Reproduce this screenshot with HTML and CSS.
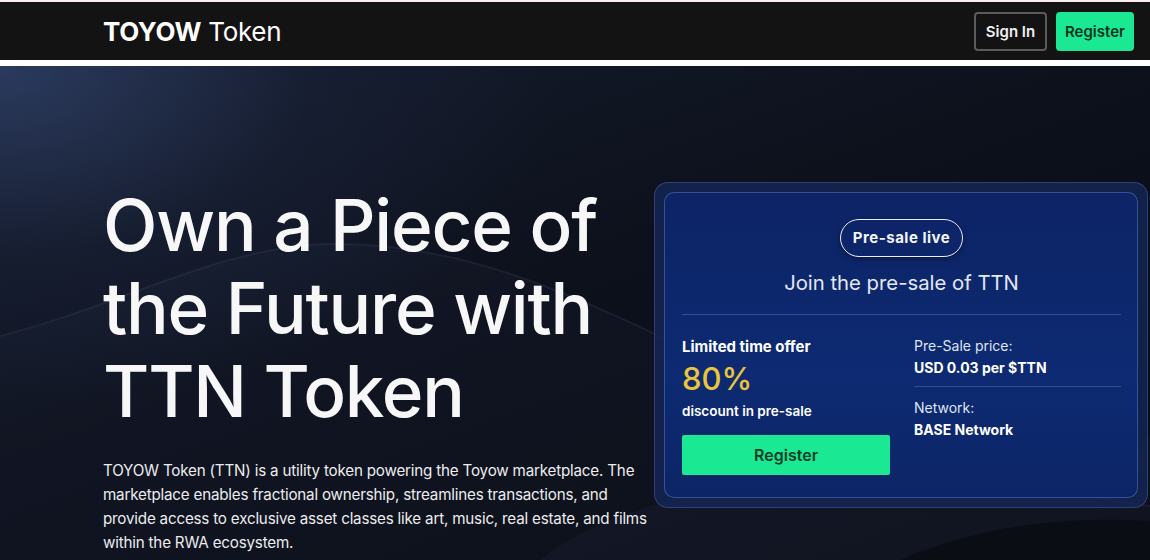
FILE: index.html
```html
<!DOCTYPE html>
<html lang="en">
<head>
<meta charset="utf-8">
<title>TOYOW Token</title>
<link rel="stylesheet" href="styles.css">
</head>
<body>
<div class="topline"></div>
<header class="nav">
  <div class="container nav-inner">
    <div class="logo"><b>TOYOW</b> Token</div>
    <div class="nav-actions">
      <a class="btn btn-outline" href="#">Sign In</a>
      <a class="btn btn-green" href="#">Register</a>
    </div>
  </div>
</header>
<div class="gap"></div>
<main class="hero">
  <svg class="waves" viewBox="0 0 1150 494" preserveAspectRatio="none" aria-hidden="true">
    <path d="M0 270 C 120 240, 220 180, 330 178 C 450 176, 560 220, 700 290 C 850 365, 1000 420, 1150 440 L1150 494 L0 494 Z" fill="rgba(70,85,130,0.07)"/>
    <path d="M0 270 C 120 240, 220 180, 330 178 C 450 176, 560 220, 700 290 C 850 365, 1000 420, 1150 440" fill="none" stroke="rgba(130,150,200,0.10)" stroke-width="2"/>
    <path d="M540 494 C 620 430, 760 410, 880 425 C 980 440, 1060 420, 1150 370 L1150 494 Z" fill="rgba(80,100,160,0.07)"/>
    <path d="M900 494 C 980 460, 1060 450, 1150 455 L1150 494 Z" fill="rgba(0,0,0,0.35)"/>
  </svg>
  <div class="container hero-inner">
    <section class="intro">
      <h1>Own a Piece of the Future with TTN Token</h1>
      <p>TOYOW Token (TTN) is a utility token powering the Toyow marketplace. The marketplace enables fractional ownership, streamlines transactions, and provide access to exclusive asset classes like art, music, real estate, and films within the RWA ecosystem.</p>
    </section>
    <aside class="card-outer">
      <div class="card">
        <div class="pill">Pre-sale live</div>
        <h2>Join the pre-sale of TTN</h2>
        <div class="card-grid">
          <div class="offer">
            <div class="offer-title">Limited time offer</div>
            <div class="offer-pct">80%</div>
            <div class="offer-sub">discount in pre-sale</div>
            <a class="btn-wide" href="#">Register</a>
          </div>
          <div class="facts">
            <div class="fact">
              <div class="fact-label">Pre-Sale price:</div>
              <div class="fact-value">USD 0.03 per $TTN</div>
            </div>
            <div class="fact">
              <div class="fact-label">Network:</div>
              <div class="fact-value">BASE Network</div>
            </div>
          </div>
        </div>
      </div>
    </aside>
  </div>
</main>
</body>
</html>
```
FILE: styles.css
```css
* { box-sizing: border-box; }
html, body { margin: 0; padding: 0; }
body {
  width: 1150px;
  height: 560px;
  overflow: hidden;
  background: #ffffff;
  font-family: Inter, "Noto Sans", sans-serif;
  color: #fff;
}
a { text-decoration: none; }
.topline { height: 2px; background: #fbeeee; }
.container { padding: 0 16px 0 103px; }
.nav { height: 58px; background: #131313; }
.nav-inner {
  height: 100%;
  display: flex;
  align-items: center;
  justify-content: space-between;
}
.logo { font-size: 26px; letter-spacing: -0.3px; color: #fff; font-weight: 400; }
.logo b { font-weight: 700; }
.nav-actions { display: flex; gap: 9px; }
.btn {
  display: inline-flex;
  align-items: center;
  justify-content: center;
  height: 39px;
  border-radius: 4px;
  font-size: 15px;
  font-weight: 600;
}
.btn-outline { width: 73px; border: 2px solid #5b5b5b; color: #eef0f2; }
.btn-green { width: 78px; background: #1be893; color: #0b3520; }
.gap { height: 6px; background: #fff; }
.hero {
  position: relative;
  height: 494px;
  overflow: hidden;
  background:
    radial-gradient(ellipse 700px 420px at 0% 0%, rgba(44,60,96,0.95) 0%, rgba(25,33,55,0.6) 45%, rgba(10,14,24,0) 80%),
    linear-gradient(160deg, #161d2e 0%, #0d111c 45%, #07090f 100%);
}
.waves { position: absolute; inset: 0; width: 100%; height: 100%; }
.hero-inner {
  position: relative;
  display: flex;
  justify-content: space-between;
  padding-right: 2px;
}
.intro { width: 545px; padding-top: 118px; }
h1 {
  margin: 0;
  font-size: 71px;
  line-height: 83px;
  font-weight: 500;
  letter-spacing: -1.2px;
  color: #f7f7f8;
}
.intro p {
  margin: 26px 0 0;
  font-size: 15.2px;
  line-height: 24px;
  letter-spacing: -0.2px;
  color: #ececee;
}
.card-outer {
  margin-top: 116px;
  width: 494px;
  height: 326px;
  padding: 9px;
  border-radius: 14px;
  background: rgba(22,40,92,0.75);
  border: 1px solid rgba(80,105,170,0.45);
}
.card {
  height: 100%;
  border-radius: 10px;
  background: linear-gradient(180deg, #0d2466 0%, #0d2a72 60%, #0c2566 100%);
  border: 1px solid rgba(90,120,190,0.55);
  padding: 26px 16px 0 17px;
  display: flex;
  flex-direction: column;
  align-items: center;
}
.pill {
  border: 1px solid #e8ecf6;
  border-radius: 20px;
  padding: 8px 12px 9px;
  font-size: 15px;
  font-weight: 700;
  letter-spacing: 0.5px;
  color: #f2f4fa;
  box-shadow: 0 2px 6px rgba(0,0,0,0.35);
}
h2 {
  margin: 13px 0 0;
  font-size: 20.3px;
  font-weight: 400;
  color: #e3e8f5;
  width: 100%;
  text-align: center;
  padding-bottom: 19px;
  border-bottom: 1px solid rgba(120,145,210,0.35);
}
.card-grid {
  width: 100%;
  display: grid;
  grid-template-columns: 208px 1fr;
  column-gap: 24px;
  padding-top: 22px;
}
.offer-title { font-size: 15px; font-weight: 700; color: #fff; }
.offer-pct { font-size: 31px; font-weight: 500; color: #e9c53c; margin-top: 4px; line-height: 38px; }
.offer-sub { font-size: 13.5px; font-weight: 600; color: #fff; margin-top: 5px; }
.btn-wide {
  display: flex;
  align-items: center;
  justify-content: center;
  margin-top: 16px;
  height: 40px;
  border-radius: 2px;
  background: #1be893;
  color: #0f3d27;
  font-size: 16px;
  font-weight: 600;
}
.fact { padding-bottom: 10px; }
.fact + .fact { border-top: 1px solid rgba(120,145,210,0.35); padding-top: 12px; }
.fact-label { font-size: 14px; color: #dfe5f3; }
.fact-value { font-size: 14px; font-weight: 700; color: #fff; margin-top: 5px; }
```
